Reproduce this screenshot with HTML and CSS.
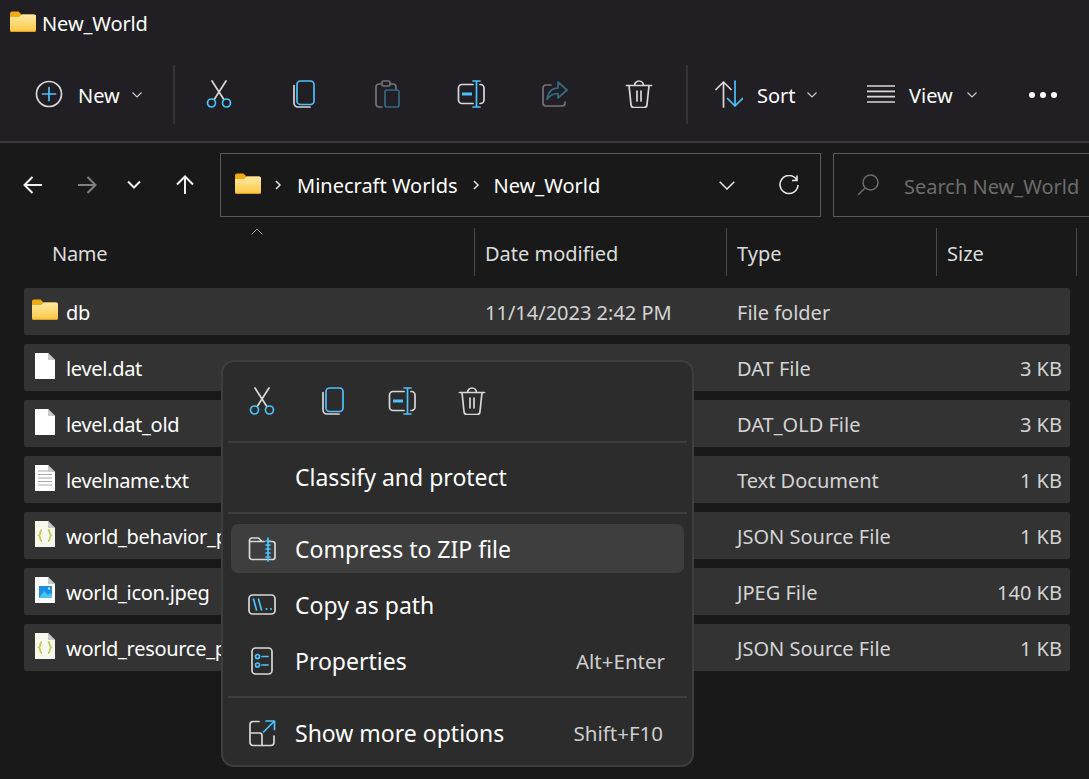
FILE: index.html
```html
<!DOCTYPE html>
<html lang="en">
<head>
    <meta charset="UTF-8">
    <meta name="viewport" content="width=device-width, initial-scale=1.0">
    <title>New_World</title>
    <link rel="stylesheet" href="styles.css">
</head>
<body>
    <svg class="defs" width="0" height="0">
        <defs>
            <linearGradient id="folderFill" x1="0" y1="0" x2="0" y2="1">
                <stop offset="0" stop-color="#ffeaa5"/>
                <stop offset="1" stop-color="#fcc644"/>
            </linearGradient>
            <symbol id="i-folder" viewBox="0 0 26 21">
                <path d="M0 2.5A2 2 0 0 1 2 .5h6.5l3 3H24a2 2 0 0 1 2 2V10H0z" fill="#f3ab12"/>
                <path d="M0 6l9 0 3-2.5h12a2 2 0 0 1 2 2V19a2 2 0 0 1-2 2H2a2 2 0 0 1-2-2z" fill="url(#folderFill)"/>
                <path d="M.5 20.4h25" stroke="#d99c1e" fill="none"/>
            </symbol>
            <symbol id="i-page" viewBox="0 0 20 26">
                <path d="M0 0h13l7 7v19H0z" fill="#fff"/>
                <path d="M13 0l7 7h-7z" fill="#c9c9c9"/>
            </symbol>
            <symbol id="i-json" viewBox="0 0 20 26">
                <path d="M0 0h13l7 7v19H0z" fill="#f7f7ee"/>
                <path d="M13 0l7 7h-7z" fill="#c9c9c9"/>
                <path d="M7 9C4.500 9 6 13.500 4 14.500 6 15.500 4.500 20 7 20M13 9c2.500 0 1 4.500 3 5.500-2 1-.5 5.500-3 5.500" stroke="#c6c85a" stroke-width="1.800" fill="none"/>
            </symbol>
            <symbol id="i-cut" viewBox="0 0 28 28">
                <path class="w" d="M7 1l11.500 18M21 1L9.500 19"/>
                <circle class="b" cx="6.500" cy="23" r="4"/>
                <circle class="b" cx="21.500" cy="23" r="4"/>
            </symbol>
            <symbol id="i-copy" viewBox="0 0 28 28">
                <path class="w" d="M5 5.500V23a4 4 0 0 0 4 4h12"/>
                <rect class="b" x="8" y="1" width="17" height="23.500" rx="3.500"/>
            </symbol>
            <symbol id="i-paste" viewBox="0 0 28 28">
                <path class="w" d="M9 27H6a3 3 0 0 1-3-3V7a3 3 0 0 1 3-3h3M17 4h3a3 3 0 0 1 3 3v3"/>
                <rect class="w" x="9" y="1" width="8" height="5" rx="1.500"/>
                <rect class="b" x="12" y="10" width="14" height="17" rx="2"/>
            </symbol>
            <symbol id="i-rename" viewBox="0 0 28 28">
                <path class="w" d="M16 4.500H5A3.500 3.500 0 0 0 1.500 8v12A3.500 3.500 0 0 0 5 23.500h11M23 4.500h.500A3.500 3.500 0 0 1 27 8v12a3.500 3.500 0 0 1-3.500 3.500H23"/>
                <path class="b" d="M16 1h7M16 27h7M19.500 1v26"/>
                <path class="b thick" d="M5 14h10"/>
            </symbol>
            <symbol id="i-share" viewBox="0 0 28 28">
                <path class="w" d="M10 5H5a3 3 0 0 0-3 3v15a3 3 0 0 0 3 3h16a3 3 0 0 0 3-3v-1"/>
                <path class="b" d="M17 2l9 8-9 8v-4.500c-5 0-8 1.500-11 6 1-7 5-11.500 11-11.500z"/>
            </symbol>
            <symbol id="i-delete" viewBox="0 0 28 28">
                <path class="w" d="M1.500 5.500h25M9.500 5.500a4.500 4.500 0 0 1 9 0M4 5.500l2 19a3 3 0 0 0 3 3h10a3 3 0 0 0 3-3l2-19M12 11v10M16 11v10"/>
            </symbol>
            <symbol id="i-zip" viewBox="0 0 28 28">
                <path class="w" d="M20 6.500h4.500a2.500 2.500 0 0 1 2.500 2.500v13a2.500 2.500 0 0 1-2.500 2.500H4A2.500 2.500 0 0 1 1.500 22V5.500A2.500 2.500 0 0 1 4 3h6.500l3.500 3.500h-12.500M14 6.500h2"/>
                <path class="b" d="M20 3v23M18 6h4M18 10h4M18 14h4M18 18h4M18 22h4"/>
            </symbol>
            <symbol id="i-path" viewBox="0 0 28 28">
                <rect class="w" x="1" y="4" width="26" height="19" rx="3.500"/>
                <path class="b" d="M5.500 8l3 11M10.500 8l3 11"/>
                <circle class="dot" cx="18.500" cy="18" r="1.100"/>
                <circle class="dot" cx="23" cy="18" r="1.100"/>
            </symbol>
            <symbol id="i-props" viewBox="0 0 28 28">
                <rect class="w" x="4" y="1" width="20" height="26" rx="3.500"/>
                <circle class="b" cx="9.500" cy="9.500" r="2"/>
                <circle class="b" cx="9.500" cy="18" r="2"/>
                <path class="b" d="M14 9.500h6M14 18h6"/>
            </symbol>
            <symbol id="i-more" viewBox="0 0 28 28">
                <path class="w" d="M11 2.500H5a3 3 0 0 0-3 3v18a3 3 0 0 0 3 3h18a3 3 0 0 0 3-3v-6.500M2 14h9.500a2.500 2.500 0 0 1 2.500 2.500v10"/>
                <path class="b" d="M15.500 13L26 2.500M18 2h8.500v8.500"/>
            </symbol>
        </defs>
    </svg>

    <div class="titlebar">
        <svg class="ico-folder"><use href="#i-folder"/></svg>
        <span>New_World</span>
    </div>

    <div class="toolbar">
        <div class="tool-text tool-new">
            <svg class="ico" viewBox="0 0 28 28"><circle class="w" cx="14" cy="14" r="12.500"/><path class="b" d="M14 7.500v13M7.500 14h13"/></svg>
            <span>New</span>
            <svg class="caret" viewBox="0 0 10 6"><path d="M.5.500L5 5 9.500.500"/></svg>
        </div>
        <div class="tool-sep"></div>
        <div class="tool-btn"><svg class="ico"><use href="#i-cut"/></svg></div>
        <div class="tool-btn"><svg class="ico"><use href="#i-copy"/></svg></div>
        <div class="tool-btn off"><svg class="ico"><use href="#i-paste"/></svg></div>
        <div class="tool-btn"><svg class="ico"><use href="#i-rename"/></svg></div>
        <div class="tool-btn off"><svg class="ico"><use href="#i-share"/></svg></div>
        <div class="tool-btn"><svg class="ico"><use href="#i-delete"/></svg></div>
        <div class="tool-sep"></div>
        <div class="tool-text tool-sort">
            <svg class="ico" viewBox="0 0 28 28"><path class="w" d="M8.500 27V2M1 9.500L8.500 2 16 9.500"/><path class="b" d="M20 1v25M12.500 18.500L20 26l7.500-7.500"/></svg>
            <span>Sort</span>
            <svg class="caret" viewBox="0 0 10 6"><path d="M.5.500L5 5 9.500.500"/></svg>
        </div>
        <div class="tool-text tool-view">
            <svg class="ico" viewBox="0 0 28 28"><path class="w" d="M0 6h28M0 11.300h28M0 16.600h28M0 22h28"/></svg>
            <span>View</span>
            <svg class="caret" viewBox="0 0 10 6"><path d="M.5.500L5 5 9.500.500"/></svg>
        </div>
        <div class="tool-dots"><i></i><i></i><i></i></div>
    </div>

    <div class="navbar">
        <div class="nav-btns">
            <svg class="nav-arrow" viewBox="0 0 20 20"><path d="M19 10H1.500M9.500 2l-8 8 8 8"/></svg>
            <svg class="nav-arrow dim" viewBox="0 0 20 20"><path d="M1 10h17.500M10.500 2l8 8-8 8"/></svg>
            <svg class="nav-down" viewBox="0 0 14 9"><path d="M1 1.500l6 6 6-6"/></svg>
            <svg class="nav-arrow" viewBox="0 0 20 20"><path d="M10 19V1.500M2 9.500l8-8 8 8"/></svg>
        </div>
        <div class="address">
            <svg class="ico-folder"><use href="#i-folder"/></svg>
            <svg class="crumb-sep" viewBox="0 0 6 10"><path d="M1 1l4 4-4 4"/></svg>
            <span>Minecraft Worlds</span>
            <svg class="crumb-sep" viewBox="0 0 6 10"><path d="M1 1l4 4-4 4"/></svg>
            <span>New_World</span>
            <svg class="addr-down" viewBox="0 0 16 9"><path d="M.7.700L8 8 15.300.700"/></svg>
            <svg class="addr-refresh" viewBox="0 0 20 20"><path d="M17.500 4.500A9 9 0 1 0 19 10M18 .500v5h-5"/></svg>
        </div>
        <div class="search">
            <svg class="search-ico" viewBox="0 0 22 22"><circle cx="13.500" cy="8.500" r="7.500"/><path d="M8 14L1 21"/></svg>
            <span>Search New_World</span>
        </div>
    </div>

    <div class="columns">
        <div class="col col-name">Name</div>
        <div class="col">Date modified</div>
        <div class="col">Type</div>
        <div class="col">Size</div>
        <svg class="sort-mark" viewBox="0 0 12 7"><path d="M.5 6.500L6 1l5.500 5.500"/></svg>
    </div>

    <div class="files">
        <div class="file">
            <div class="file-name"><svg class="ico-folder"><use href="#i-folder"/></svg><span>db</span></div>
            <div class="file-cell">11/14/2023 2:42 PM</div>
            <div class="file-cell">File folder</div>
            <div class="file-size"></div>
        </div>
        <div class="file">
            <div class="file-name"><svg class="ico-page"><use href="#i-page"/></svg><span>level.dat</span></div>
            <div class="file-cell"></div>
            <div class="file-cell">DAT File</div>
            <div class="file-size">3 KB</div>
        </div>
        <div class="file">
            <div class="file-name"><svg class="ico-page"><use href="#i-page"/></svg><span>level.dat_old</span></div>
            <div class="file-cell"></div>
            <div class="file-cell">DAT_OLD File</div>
            <div class="file-size">3 KB</div>
        </div>
        <div class="file">
            <div class="file-name">
                <svg class="ico-page" viewBox="0 0 20 26"><use href="#i-page" width="20" height="26"/><path d="M3 6h10M3 9.500h14M3 13h14M3 16.500h14M3 20h14" stroke="#a8a8a8" fill="none"/></svg>
                <span>levelname.txt</span>
            </div>
            <div class="file-cell"></div>
            <div class="file-cell">Text Document</div>
            <div class="file-size">1 KB</div>
        </div>
        <div class="file">
            <div class="file-name"><svg class="ico-page"><use href="#i-json"/></svg><span>world_behavior_p</span></div>
            <div class="file-cell"></div>
            <div class="file-cell">JSON Source File</div>
            <div class="file-size">1 KB</div>
        </div>
        <div class="file">
            <div class="file-name">
                <svg class="ico-page" viewBox="0 0 20 26"><use href="#i-page" width="20" height="26"/><rect x="4" y="9" width="13" height="12" fill="#1f8fe0"/><path d="M4 21l5-7 4 4 2-2 2 2v3z" fill="#48c4f5"/><rect x="13" y="10.500" width="2" height="2" fill="#bfe6fb"/></svg>
                <span>world_icon.jpeg</span>
            </div>
            <div class="file-cell"></div>
            <div class="file-cell">JPEG File</div>
            <div class="file-size">140 KB</div>
        </div>
        <div class="file">
            <div class="file-name"><svg class="ico-page"><use href="#i-json"/></svg><span>world_resource_p</span></div>
            <div class="file-cell"></div>
            <div class="file-cell">JSON Source File</div>
            <div class="file-size">1 KB</div>
        </div>
    </div>

    <div class="menu">
        <div class="menu-top">
            <div class="menu-top-btn"><svg class="ico"><use href="#i-cut"/></svg></div>
            <div class="menu-top-btn"><svg class="ico"><use href="#i-copy"/></svg></div>
            <div class="menu-top-btn"><svg class="ico"><use href="#i-rename"/></svg></div>
            <div class="menu-top-btn"><svg class="ico"><use href="#i-delete"/></svg></div>
        </div>
        <div class="menu-sep"></div>
        <div class="menu-item menu-first"><span class="menu-ico"></span><span>Classify and protect</span></div>
        <div class="menu-sep"></div>
        <div class="menu-item active"><svg class="ico menu-ico"><use href="#i-zip"/></svg><span>Compress to ZIP file</span></div>
        <div class="menu-item"><svg class="ico menu-ico"><use href="#i-path"/></svg><span>Copy as path</span></div>
        <div class="menu-item menu-last"><svg class="ico menu-ico"><use href="#i-props"/></svg><span>Properties</span><span class="shortcut">Alt+Enter</span></div>
        <div class="menu-sep"></div>
        <div class="menu-item"><svg class="ico menu-ico"><use href="#i-more"/></svg><span>Show more options</span><span class="shortcut shortcut-last">Shift+F10</span></div>
    </div>
</body>
</html>
```

FILE: styles.css
```css
html, body { margin: 0; padding: 0; }
body { position: relative; width: 1089px; height: 779px; overflow: hidden; background-color: #191919; color: #fff; font-family: "Noto Sans", "Open Sans", sans-serif; font-size: 20px; }
.defs { position: absolute; }

/* shared icon strokes */
.w, .b { fill: none; stroke-width: 1.7; stroke-linecap: round; stroke-linejoin: round; }
.w { stroke: #d8d8d8; }
.b { stroke: #4cc2ff; }
.b.thick { stroke-width: 3; stroke-linecap: butt; }
.dot { fill: #4cc2ff; }
.ico { width: 28px; height: 28px; flex: none; }
.ico-folder { width: 26px; height: 21px; flex: none; }
.ico-page { width: 20px; height: 26px; flex: none; }

.titlebar { height: 47px; padding-left: 10px; display: flex; align-items: center; gap: 6px; background-color: #211f23; letter-spacing: -0.1px; }
.titlebar .ico-folder { margin-top: -4px; }

.toolbar { height: 94px; display: flex; align-items: center; background-color: #211f23; border-bottom: 2px solid #3a3a3a; }
.tool-text { display: flex; align-items: center; flex: none; }
.tool-text span { padding-top: 3px; }
.tool-text .caret { width: 10px; height: 6px; fill: none; stroke: #c8c8c8; stroke-width: 1.2; margin-top: 2px; }
.tool-new { width: 138px; padding-left: 35px; }
.tool-new span { margin-left: 15px; width: 54px; }
.tool-sep { width: 2px; height: 59px; background-color: #343336; flex: none; }
.tool-btn { width: 84px; display: flex; justify-content: center; flex: none; }
.tool-btn.off { opacity: 0.45; }
.tool-sep + .tool-btn { margin-left: 2px; }
.tool-btn + .tool-sep { margin-left: 5px; }
.tool-sort { margin-left: 27px; width: 152px; }
.tool-sort span { margin-left: 14px; width: 50px; }
.tool-view { width: 122px; }
.tool-view span { margin-left: 14px; width: 58px; }
.tool-dots { margin: 2px 0 0 40px; display: flex; gap: 5px; }
.tool-dots i { width: 6px; height: 6px; border-radius: 50%; background-color: #fff; }

.navbar { display: flex; padding-top: 10px; height: 64px; }
.nav-btns { width: 220px; display: flex; align-items: center; flex: none; }
.nav-arrow { width: 20px; height: 20px; fill: none; stroke: #f0f0f0; stroke-width: 2; flex: none; }
.nav-arrow.dim { stroke: #808080; margin-left: 34px; }
.nav-arrow:first-child { margin-left: 23px; }
.nav-down { width: 14px; height: 9px; fill: none; stroke: #f0f0f0; stroke-width: 2; margin-left: 30px; margin-top: -2px; }
.nav-down + .nav-arrow { margin-left: 34px; }
.address { width: 601px; height: 64px; box-sizing: border-box; border: 1px solid #5a5a5a; display: flex; align-items: center; padding-left: 14px; flex: none; }
.address .ico-folder { margin-top: -4px; }
.crumb-sep { width: 6px; height: 10px; fill: none; stroke: #e8e8e8; stroke-width: 1.5; margin: 0 16px 0 14px; flex: none; }
.address span + .crumb-sep { margin: 0 15px; }
.addr-down { width: 16px; height: 9px; fill: none; stroke: #e8e8e8; stroke-width: 1.5; margin-left: auto; }
.addr-refresh { width: 20px; height: 20px; fill: none; stroke: #e8e8e8; stroke-width: 1.6; margin: 0 21px 0 44px; }
.search { width: 300px; height: 64px; box-sizing: border-box; margin-left: 12px; border: 1px solid #5a5a5a; display: flex; align-items: center; padding-left: 23px; flex: none; color: #6c6c6c; }
.search span { padding-top: 2px; }
.search-ico { width: 22px; height: 22px; fill: none; stroke: #6c6c6c; stroke-width: 1.5; margin-right: 25px; flex: none; }

.columns { position: relative; display: grid; grid-template-columns: 451px 252px 210px 140px; margin: 11px 0 0 24px; height: 48px; color: #dcdcdc; }
.col { display: flex; align-items: center; padding: 2px 0 0 10px; border-right: 1px solid #4a4a4a; }
.col-name { padding-left: 28px; letter-spacing: -0.3px; }
.sort-mark { position: absolute; left: 227px; top: 0; width: 12px; height: 7px; fill: none; stroke: #9a9a9a; stroke-width: 1; }

.files { margin: 12px 19px 0 24px; display: flex; flex-direction: column; gap: 9px; }
.file { display: grid; grid-template-columns: 450px 252px 210px 134px; align-items: center; height: 47px; padding-top: 2px; box-sizing: border-box; background-color: #333; border-radius: 2px; }
.file-name { display: flex; align-items: center; gap: 11px; padding-left: 8px; white-space: nowrap; letter-spacing: -0.3px; }
.file-name .ico-folder { margin-top: -6px; margin-right: -3px; }
.file-name .ico-page { margin-left: 3px; margin-top: -6px; }
.file-cell { padding-left: 11px; color: #d4d4d4; white-space: nowrap; }
.file-size { text-align: right; padding-right: 8px; color: #d4d4d4; }

/* context menu floats over the list */
.menu { position: absolute; left: 221px; top: 360px; width: 473px; height: 407px; box-sizing: border-box; padding: 0 5px; background-color: #2c2c2c; border: 2px solid #3e3e3e; border-radius: 13px; font-size: 23px; }
.menu-top { display: flex; height: 77px; align-items: center; margin-left: -1px; padding-bottom: 2px; }
.menu-top-btn { width: 70px; display: flex; justify-content: center; }
.menu-sep { height: 2px; background-color: #3e3e3e; }
.menu-item { height: 49px; display: flex; align-items: center; margin: 0 3px 7px 3px; padding: 0 19px 0 17px; border-radius: 7px; }
.menu-sep + .menu-item { margin-top: 10px; }
.menu-sep + .menu-first { height: 56px; margin-top: 6px; margin-bottom: 7px; }
.menu-last { margin-bottom: 11px; }
.menu-item.active { background-color: #3e3e3e; }
.menu-ico { width: 28px; height: 28px; flex: none; margin-right: 19px; }
.shortcut { margin-left: auto; font-size: 20.5px; color: #cfcfcf; }
.shortcut-last { margin-right: 2px; }
```
